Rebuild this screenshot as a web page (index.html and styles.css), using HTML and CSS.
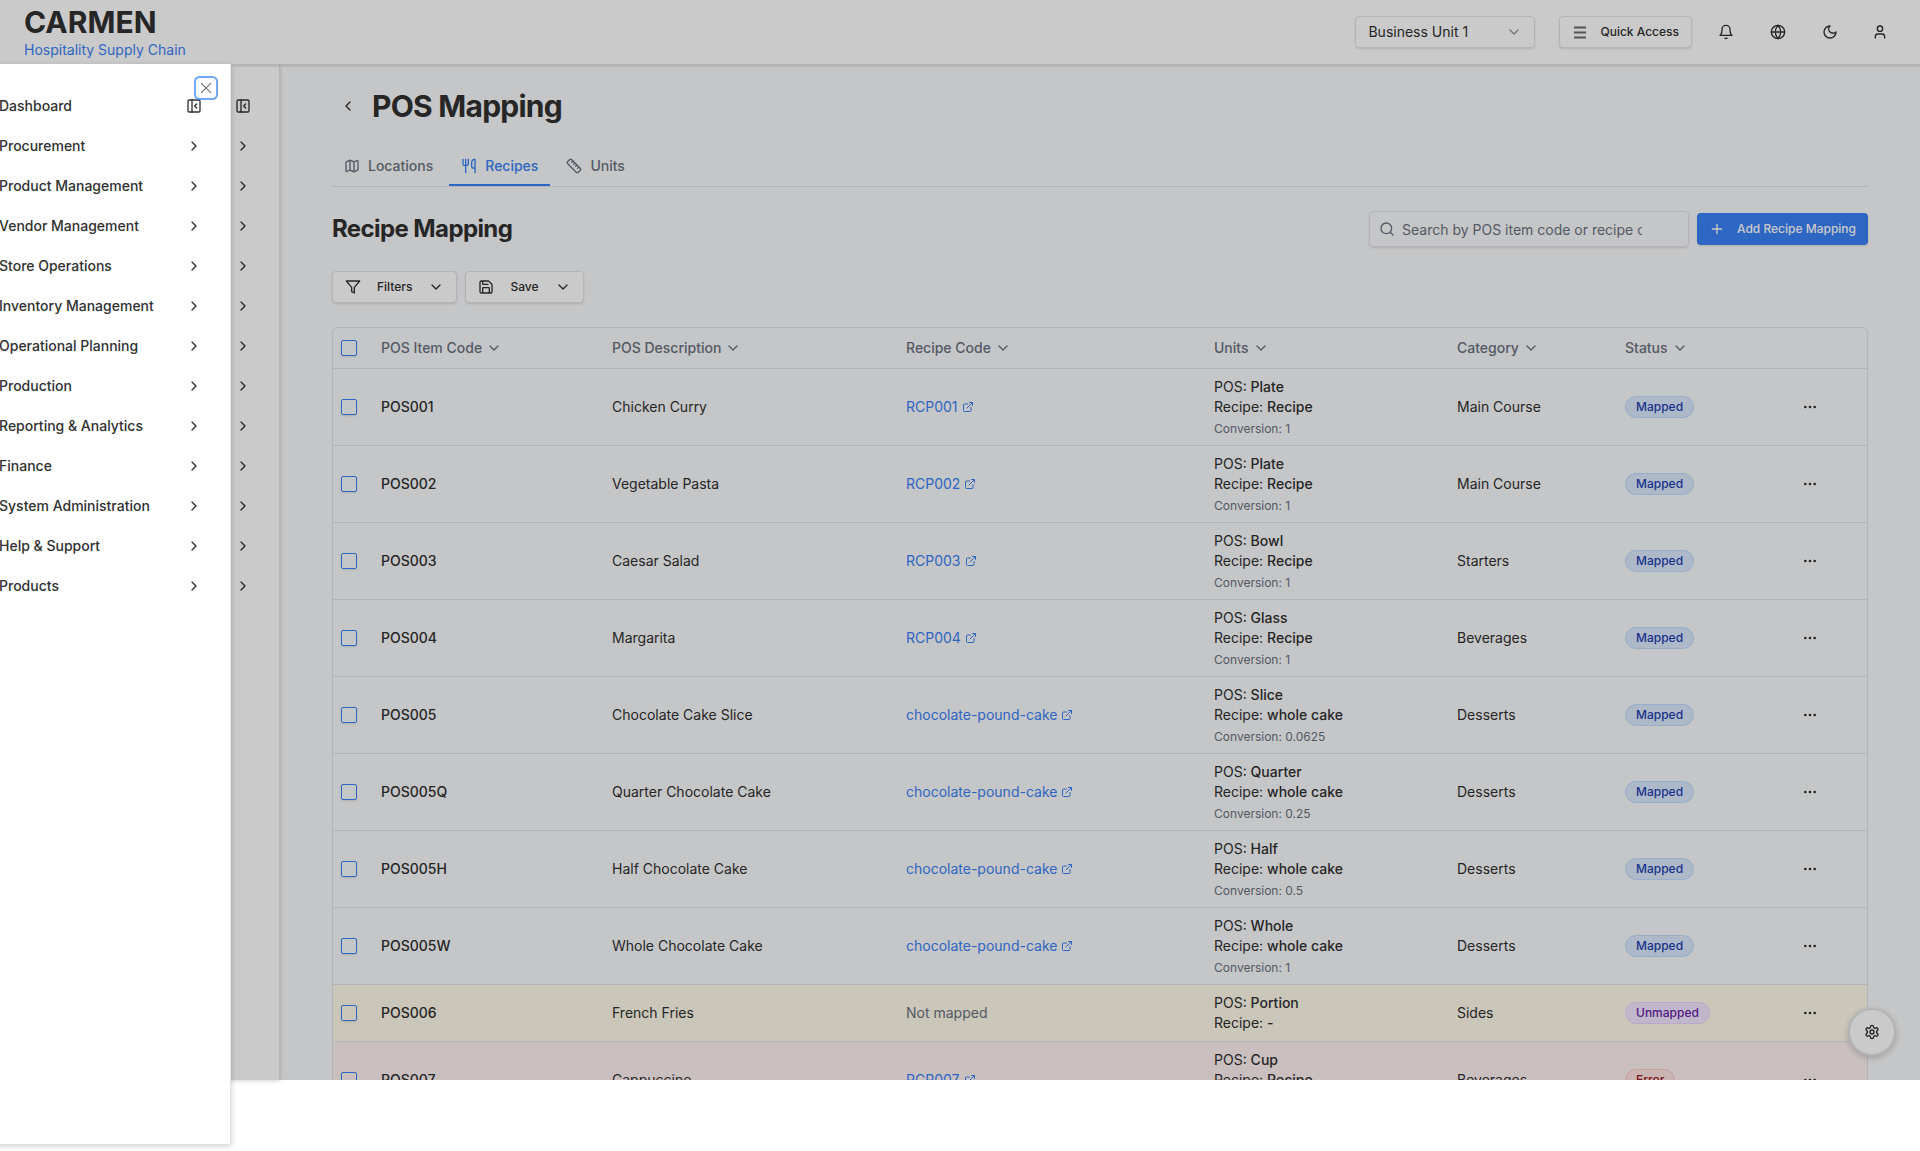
FILE: index.html
```html
<!DOCTYPE html>
<html lang="en">
<head>
<meta charset="utf-8">
<title>Carmen - POS Mapping</title>
<link rel="stylesheet" href="styles.css">
</head>
<body>
<svg class="sprite" aria-hidden="true">
  <symbol id="chev-right" viewBox="0 0 24 24"><path d="m9 18 6-6-6-6"/></symbol>
  <symbol id="chev-left" viewBox="0 0 24 24"><path d="m15 18-6-6 6-6"/></symbol>
  <symbol id="chev-down" viewBox="0 0 24 24"><path d="m6 9 6 6 6-6"/></symbol>
  <symbol id="panel" viewBox="0 0 24 24"><rect width="18" height="18" x="3" y="3" rx="2"/><path d="M9 3v18M16 15l-3-3 3-3"/></symbol>
  <symbol id="cross" viewBox="0 0 15 15"><path d="M3.2 3.2l8.6 8.6M11.8 3.2l-8.6 8.6" stroke-width="1"/></symbol>
  <symbol id="map" viewBox="0 0 24 24"><path d="M14.106 5.553a2 2 0 0 0 1.788 0l3.659-1.83A1 1 0 0 1 21 4.619v12.764a1 1 0 0 1-.553.894l-4.553 2.277a2 2 0 0 1-1.788 0l-4.212-2.106a2 2 0 0 0-1.788 0l-3.659 1.83A1 1 0 0 1 3 19.381V6.618a1 1 0 0 1 .553-.894l4.553-2.277a2 2 0 0 1 1.788 0zM15 5.764v15M9 3.236v15"/></symbol>
  <symbol id="utensils" viewBox="0 0 24 24"><path d="M3 2v7c0 1.100.9 2 2 2h4a2 2 0 0 0 2-2V2M7 2v20M21 15V2a5 5 0 0 0-5 5v6c0 1.100.9 2 2 2h3Zm0 0v7"/></symbol>
  <symbol id="ruler" viewBox="0 0 24 24"><path d="M21.300 15.300a2.400 2.400 0 0 1 0 3.400l-2.600 2.600a2.400 2.400 0 0 1-3.400 0L2.700 8.700a2.410 2.410 0 0 1 0-3.400l2.600-2.600a2.410 2.410 0 0 1 3.400 0ZM14.500 12.500l2-2M11.500 9.500l2-2M8.500 6.500l2-2M17.500 15.500l2-2"/></symbol>
  <symbol id="search" viewBox="0 0 24 24"><circle cx="11" cy="11" r="8"/><path d="m21 21-4.300-4.300"/></symbol>
  <symbol id="plus" viewBox="0 0 24 24"><path d="M5 12h14M12 5v14"/></symbol>
  <symbol id="filter" viewBox="0 0 24 24"><path d="M22 3H2l8 9.460V19l4 2v-8.540z"/></symbol>
  <symbol id="save" viewBox="0 0 24 24"><path d="M15.200 3a2 2 0 0 1 1.400.6l3.800 3.800a2 2 0 0 1 .6 1.400V19a2 2 0 0 1-2 2H5a2 2 0 0 1-2-2V5a2 2 0 0 1 2-2zM17 21v-7a1 1 0 0 0-1-1H8a1 1 0 0 0-1 1v7M7 3v4a1 1 0 0 0 1 1h7"/></symbol>
  <symbol id="external" viewBox="0 0 24 24"><path d="M15 3h6v6M10 14 21 3M18 13v6a2 2 0 0 1-2 2H5a2 2 0 0 1-2-2V8a2 2 0 0 1 2-2h6"/></symbol>
  <symbol id="dots" viewBox="0 0 24 24"><g fill="currentColor"><circle cx="12" cy="12" r="1"/><circle cx="19" cy="12" r="1"/><circle cx="5" cy="12" r="1"/></g></symbol>
  <symbol id="menu" viewBox="0 0 16 16"><path d="M2 3.500h12M2 8.500h12M2 13.500h12" stroke-width="2" stroke-linecap="butt"/></symbol>
  <symbol id="bell" viewBox="0 0 24 24"><path d="M6 8a6 6 0 0 1 12 0c0 7 3 9 3 9H3s3-2 3-9M10.300 21a1.940 1.940 0 0 0 3.400 0"/></symbol>
  <symbol id="globe" viewBox="0 0 24 24"><circle cx="12" cy="12" r="10"/><path d="M12 2a14.500 14.500 0 0 0 0 20 14.500 14.500 0 0 0 0-20M2 12h20"/></symbol>
  <symbol id="moon" viewBox="0 0 24 24"><path d="M12 3a6 6 0 0 0 9 9 9 9 0 1 1-9-9Z"/></symbol>
  <symbol id="user" viewBox="0 0 24 24"><path d="M19 21v-2a4 4 0 0 0-4-4H9a4 4 0 0 0-4 4v2"/><circle cx="12" cy="7" r="4"/></symbol>
  <symbol id="gear" viewBox="0 0 24 24"><path d="M12.220 2h-.44a2 2 0 0 0-2 2v.18a2 2 0 0 1-1 1.730l-.43.25a2 2 0 0 1-2 0l-.15-.08a2 2 0 0 0-2.730.73l-.22.38a2 2 0 0 0 .73 2.730l.15.1a2 2 0 0 1 1 1.720v.51a2 2 0 0 1-1 1.740l-.15.09a2 2 0 0 0-.73 2.730l.22.38a2 2 0 0 0 2.730.73l.15-.08a2 2 0 0 1 2 0l.43.25a2 2 0 0 1 1 1.730V20a2 2 0 0 0 2 2h.44a2 2 0 0 0 2-2v-.18a2 2 0 0 1 1-1.730l.43-.25a2 2 0 0 1 2 0l.15.08a2 2 0 0 0 2.730-.73l.22-.39a2 2 0 0 0-.73-2.730l-.15-.08a2 2 0 0 1-1-1.740v-.5a2 2 0 0 1 1-1.740l.15-.09a2 2 0 0 0 .73-2.730l-.22-.38a2 2 0 0 0-2.730-.73l-.15.08a2 2 0 0 1-2 0l-.43-.25a2 2 0 0 1-1-1.730V4a2 2 0 0 0-2-2z"/><circle cx="12" cy="12" r="3"/></symbol>
</svg>

<div class="app">
  <header class="topbar">
    <a class="brand" href="#"><span class="brand-name">CARMEN</span><span class="brand-sub">Hospitality Supply Chain</span></a>
    <div class="top-actions">
      <label class="unit-picker">
        <select aria-label="Business unit"><option>Business Unit 1</option></select>
        <svg class="icon faint"><use href="#chev-down"/></svg>
      </label>
      <div class="top-tools">
        <button class="btn quick"><svg class="icon"><use href="#menu"/></svg>Quick Access</button>
        <button class="icon-btn wide" aria-label="Notifications"><svg class="icon"><use href="#bell"/></svg></button>
        <button class="icon-btn wide" aria-label="Language"><svg class="icon"><use href="#globe"/></svg></button>
        <button class="icon-btn wide" aria-label="Theme"><svg class="icon"><use href="#moon"/></svg></button>
        <button class="icon-btn" aria-label="Account"><svg class="icon"><use href="#user"/></svg></button>
      </div>
    </div>
  </header>

  <div class="body">
    <aside class="sidebar"><nav class="nav" id="side-nav"></nav></aside>
    <main class="main">
      <div class="content">
        <div class="title-row">
          <button class="icon-btn" aria-label="Back"><svg class="icon"><use href="#chev-left"/></svg></button>
          <h1>POS Mapping</h1>
        </div>
        <nav class="tabs">
          <a class="tab" href="#"><svg class="icon"><use href="#map"/></svg>Locations</a>
          <a class="tab active" href="#"><svg class="icon"><use href="#utensils"/></svg>Recipes</a>
          <a class="tab" href="#"><svg class="icon"><use href="#ruler"/></svg>Units</a>
        </nav>
        <div class="section-head">
          <h2>Recipe Mapping</h2>
          <div class="section-tools">
            <label class="search"><svg class="icon"><use href="#search"/></svg><input type="text" aria-label="Search" placeholder="Search by POS item code or recipe code..."></label>
            <button class="btn primary"><svg class="icon"><use href="#plus"/></svg>Add Recipe Mapping</button>
          </div>
        </div>
        <div class="filters">
          <button class="btn drop"><svg class="icon"><use href="#filter"/></svg>Filters<svg class="icon"><use href="#chev-down"/></svg></button>
          <button class="btn drop"><svg class="icon"><use href="#save"/></svg>Save<svg class="icon"><use href="#chev-down"/></svg></button>
        </div>
        <div class="table-box">
          <table>
            <colgroup><col class="c-check"><col class="c-code"><col class="c-desc"><col class="c-recipe"><col class="c-units"><col class="c-cat"><col class="c-status"><col class="c-act"></colgroup>
            <thead><tr id="head"></tr></thead>
            <tbody id="rows"></tbody>
          </table>
        </div>
      </div>
    </main>
    <button class="fab" aria-label="Settings"><svg class="icon"><use href="#gear"/></svg></button>
  </div>
  <div class="overlay"></div>
</div>

<div class="sheet" role="dialog" aria-label="Navigation">
  <nav class="nav" id="sheet-nav"></nav>
  <button class="close" aria-label="Close"><svg class="icon"><use href="#cross"/></svg></button>
</div>
<script src="app.js"></script>
</body>
</html>
```
FILE: styles.css
```css
:root {
  --fg: #303030;
  --muted: #6b7280;
  --line: #e2e4e8;
  --blue: #3b82f6;
  --app-height: calc(100vh - 71px);
}
* { box-sizing: border-box; }
body {
  margin: 0;
  background: #fff;
  color: var(--fg);
  font: 14px/20px Inter, "Liberation Sans", sans-serif;
  min-height: 100vh;
  overflow: hidden;
}
.sprite { display: none; }
h1, h2 { margin: 0; font-weight: 700; letter-spacing: -0.025em; }
h1 { font-size: 30px; line-height: 36px; }
h2 { font-size: 24px; line-height: 32px; }
a { color: inherit; text-decoration: none; }
button, input, select { font: inherit; color: inherit; }
button { background: none; border: 0; padding: 0; }
.icon {
  width: 16px;
  height: 16px;
  flex: none;
  fill: none;
  stroke: currentColor;
  stroke-width: 2;
  stroke-linecap: round;
  stroke-linejoin: round;
}
.faint { opacity: 0.5; }

.app { position: relative; height: var(--app-height); display: flex; flex-direction: column; }
.topbar {
  position: relative;
  z-index: 2;
  flex: none;
  height: 65px;
  padding: 0 24px;
  display: flex;
  justify-content: space-between;
  align-items: center;
  background: #fff;
  border-bottom: 1px solid var(--line);
  box-shadow: 0 1px 2px rgba(0, 0, 0, 0.16);
}
.brand { display: flex; flex-direction: column; }
.brand-name { font-size: 30px; line-height: 36px; font-weight: 700; }
.brand-sub { color: var(--blue); }
.top-actions { display: flex; align-items: center; gap: 24px; }
.top-tools { display: flex; align-items: center; gap: 16px; }
.unit-picker {
  display: flex;
  align-items: center;
  width: 180px;
  height: 32px;
  padding: 0 12px;
  border: 1px solid var(--line);
  border-radius: 4px;
  box-shadow: 0 1px 2px rgba(0, 0, 0, 0.12);
}
.unit-picker select { flex: 1; appearance: none; border: 0; padding: 0; background: none; }
.btn {
  display: flex;
  align-items: center;
  gap: 12px;
  height: 32px;
  padding: 0 12px;
  border: 1px solid var(--line);
  border-radius: 4px;
  background: #fff;
  font-size: 12px;
  font-weight: 500;
  white-space: nowrap;
  box-shadow: 0 1px 2px rgba(0, 0, 0, 0.12);
}
.btn.drop { gap: 16px; }
.btn.quick .icon { color: #6a6a6a; }
.btn.primary { border: 0; background: var(--blue); color: #fff; }
.icon-btn { display: flex; align-items: center; justify-content: center; width: 32px; height: 32px; }
.icon-btn.wide { width: 36px; }

.body { position: relative; flex: 1; min-height: 0; display: flex; }
.sidebar {
  flex: none;
  width: 280px;
  background: #fff;
  border-right: 1px solid var(--line);
  box-shadow: 0 1px 4px rgba(0, 0, 0, 0.18);
  z-index: 1;
}
.nav { padding: 21px 28px 0 48px; }
.nav a {
  display: flex;
  align-items: center;
  height: 40px;
  font-weight: 500;
  white-space: nowrap;
}
.nav .icon { margin-left: auto; }
.main { flex: 1; min-width: 0; overflow: hidden; background: #f9fafb; padding: 23px 24px 0; }
.content { max-width: 1536px; margin: 0 auto; display: flex; flex-direction: column; gap: 24px; }
.title-row { display: flex; align-items: center; gap: 8px; height: 36px; }
.tabs { display: flex; gap: 4px; border-bottom: 1px solid var(--line); }
.tab {
  display: flex;
  align-items: center;
  gap: 8px;
  padding: 8px 12px;
  border-bottom: 2px solid transparent;
  color: var(--muted);
  font-weight: 500;
}
.tab.active { color: var(--blue); border-color: var(--blue); }
.section-head { display: flex; align-items: center; justify-content: space-between; }
.section-tools { display: flex; align-items: center; gap: 8px; }
.search {
  display: flex;
  align-items: center;
  gap: 7px;
  width: 320px;
  height: 36px;
  padding: 0 46px 0 9px;
  border: 1px solid var(--line);
  border-radius: 4px;
  color: var(--muted);
  box-shadow: 0 1px 2px rgba(0, 0, 0, 0.12);
}
.search input { flex: 1; min-width: 0; border: 0; padding: 2px 0 0; background: none; outline: 0; }
.search input::placeholder { color: var(--muted); opacity: 1; }
.filters { display: flex; gap: 8px; }

.table-box { border: 1px solid var(--line); border-radius: 6px; overflow: hidden; }
table { width: 100%; table-layout: fixed; border-collapse: separate; border-spacing: 0; }
.c-check { width: 40px; }
.c-code { width: 231px; }
.c-desc { width: 294px; }
.c-recipe { width: 308px; }
.c-units { width: 243px; }
.c-cat { width: 168px; }
.c-status { width: 169px; }
.c-act { width: 81px; }
th, td { padding: 8px; text-align: left; vertical-align: middle; border-bottom: 1px solid var(--line); }
th { height: 41px; padding: 0 8px; color: var(--muted); font-weight: 500; }
th button { display: flex; align-items: center; gap: 4px; font-weight: 500; }
input[type="checkbox"] {
  appearance: none;
  display: block;
  width: 16px;
  height: 16px;
  margin: 0;
  border: 1px solid var(--blue);
  border-radius: 2px;
  box-shadow: 0 1px 2px rgba(0, 0, 0, 0.12);
}
.code, .strong { font-weight: 500; }
.recipe-link { display: inline-flex; align-items: center; gap: 4px; color: var(--blue); }
.recipe-link .icon { width: 12px; height: 12px; }
.none { color: var(--muted); }
.conv { margin-top: 4px; font-size: 12px; line-height: 16px; color: var(--muted); }
.badge {
  display: inline-block;
  vertical-align: middle;
  padding: 2px 10px;
  border: 1px solid;
  border-radius: 11px;
  font-size: 12px;
  line-height: 16px;
  font-weight: 500;
}
.mapped .badge { color: #1e40af; background: #dbeafe; border-color: #bfdbfe; }
.unmapped { background: #fffbeb; }
.unmapped .badge { color: #6b21a8; background: #f3e8ff; border-color: #e9d5ff; }
.error { background: #fef2f2; }
.error .badge { color: #991b1b; background: #fee2e2; border-color: #fecaca; }

.fab {
  position: absolute;
  right: 24px;
  bottom: 24px;
  display: flex;
  align-items: center;
  justify-content: center;
  width: 48px;
  height: 48px;
  border: 2px solid var(--line);
  border-radius: 50%;
  background: #fff;
  box-shadow: 0 2px 6px rgba(0, 0, 0, 0.2);
}
.overlay { position: absolute; inset: 0; z-index: 3; background: rgba(0, 0, 0, 0.208); }

/* The drawer is caught part way through its slide-in. */
.sheet {
  position: absolute;
  z-index: 4;
  top: 64px;
  left: -49px;
  width: 280px;
  height: var(--app-height);
  background: #fff;
  border-right: 1px solid var(--line);
  box-shadow: 0 2px 6px rgba(0, 0, 0, 0.2);
}
.sheet .nav { padding-top: 22px; }
.close {
  position: absolute;
  top: 16px;
  right: 16px;
  width: 16px;
  height: 16px;
  border-radius: 2px;
  opacity: 0.7;
  box-shadow: 0 0 0 2px #fff, 0 0 0 4px var(--blue);
}
.close .icon { display: block; }
```
FILE: app.js
```js
const icon = (name) => `<svg class="icon"><use href="#${name}"/></svg>`;

const sections = ["Dashboard", "Procurement", "Product Management", "Vendor Management",
  "Store Operations", "Inventory Management", "Operational Planning", "Production",
  "Reporting &amp; Analytics", "Finance", "System Administration", "Help &amp; Support", "Products"];
const arrow = (i) => icon(i ? "chev-right" : "panel");
// The sidebar shows only its arrows while the drawer carries the labels.
document.getElementById("side-nav").innerHTML = sections
  .map((s, i) => `<a href="#" aria-label="${s}">${arrow(i)}</a>`).join("");
document.getElementById("sheet-nav").innerHTML = sections
  .map((s, i) => `<a href="#"><span>${s}</span>${arrow(i)}</a>`).join("");

const check = (label) => `<input type="checkbox" aria-label="${label}">`;
const columns = ["POS Item Code", "POS Description", "Recipe Code", "Units", "Category", "Status"];
document.getElementById("head").innerHTML =
  `<th>${check("Select all")}</th>` +
  columns.map((c) => `<th><button>${c}${icon("chev-down")}</button></th>`).join("") +
  "<th></th>";

// code, description, recipe, POS unit, recipe unit, conversion, category, status
const items = [
  ["POS001", "Chicken Curry", "RCP001", "Plate", "Recipe", "1", "Main Course", "Mapped"],
  ["POS002", "Vegetable Pasta", "RCP002", "Plate", "Recipe", "1", "Main Course", "Mapped"],
  ["POS003", "Caesar Salad", "RCP003", "Bowl", "Recipe", "1", "Starters", "Mapped"],
  ["POS004", "Margarita", "RCP004", "Glass", "Recipe", "1", "Beverages", "Mapped"],
  ["POS005", "Chocolate Cake Slice", "chocolate-pound-cake", "Slice", "whole cake", "0.0625", "Desserts", "Mapped"],
  ["POS005Q", "Quarter Chocolate Cake", "chocolate-pound-cake", "Quarter", "whole cake", "0.25", "Desserts", "Mapped"],
  ["POS005H", "Half Chocolate Cake", "chocolate-pound-cake", "Half", "whole cake", "0.5", "Desserts", "Mapped"],
  ["POS005W", "Whole Chocolate Cake", "chocolate-pound-cake", "Whole", "whole cake", "1", "Desserts", "Mapped"],
  ["POS006", "French Fries", "", "Portion", "-", "", "Sides", "Unmapped"],
  ["POS007", "Cappuccino", "RCP007", "Cup", "Recipe", "1", "Beverages", "Error"],
];
document.getElementById("rows").innerHTML = items
  .map(([code, desc, recipe, pos, unit, conv, cat, status]) => `
    <tr class="${status.toLowerCase()}">
      <td>${check("Select " + code)}</td>
      <td class="code">${code}</td>
      <td>${desc}</td>
      <td>${recipe ? `<a class="recipe-link" href="#">${recipe}${icon("external")}</a>` : '<span class="none">Not mapped</span>'}</td>
      <td>
        <div>POS: <span class="strong">${pos}</span></div>
        <div>Recipe: <span class="strong">${unit}</span></div>
        ${conv ? `<div class="conv">Conversion: ${conv}</div>` : ""}
      </td>
      <td>${cat}</td>
      <td><span class="badge">${status}</span></td>
      <td><button class="icon-btn" aria-label="Actions for ${code}">${icon("dots")}</button></td>
    </tr>`)
  .join("");
```
